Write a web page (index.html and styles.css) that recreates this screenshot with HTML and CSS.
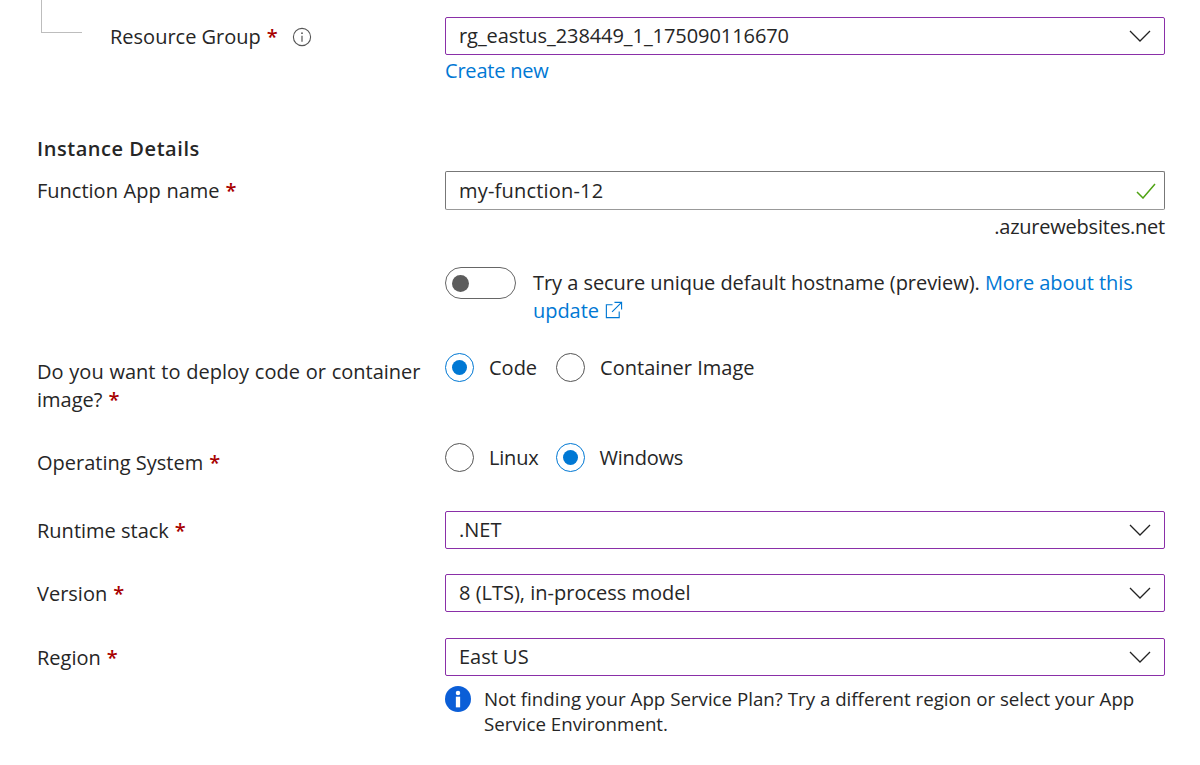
FILE: index.html
```html
<!DOCTYPE html>
<html lang="en">
<head>
<meta charset="utf-8">
<title>Create Function App</title>
<link rel="stylesheet" href="styles.css">
</head>
<body>
<main class="form">
  <div class="row">
    <div class="label label-nested">
      <span class="connector"></span>
      <span>Resource Group</span><span class="req">*</span>
      <svg class="info-outline" viewBox="0 0 20 20" width="20" height="20"><circle cx="10" cy="10" r="8.6" fill="none" stroke="#555" stroke-width="1.1"/><circle cx="10" cy="6.2" r="0.9" fill="#555"/><path d="M10 8.8v6" stroke="#555" stroke-width="1.2"/></svg>
    </div>
    <div class="field">
      <div class="select">
        <span class="value-tight">rg_eastus_238449_1_175090116670</span>
        <svg class="chev" viewBox="0 0 22 12" width="22" height="12"><path d="M1 1l10 10L21 1" fill="none" stroke="#222" stroke-width="1.3"/></svg>
      </div>
      <a class="link create">Create new</a>
    </div>
  </div>

  <h2 class="heading">Instance Details</h2>

  <div class="row">
    <div class="label label-fn">Function App name<span class="req">*</span></div>
    <div class="field">
      <div class="select input">
        <span class="value-wide">my-function-12</span>
        <svg class="check" viewBox="0 0 20 16" width="20" height="16"><path d="M1 9l6 6L19 1" fill="none" stroke="#4fa313" stroke-width="1.5"/></svg>
      </div>
      <div class="suffix">.azurewebsites.net</div>
    </div>
  </div>

  <div class="row row-toggle">
    <div></div>
    <div class="toggle-line">
      <span class="toggle"><span class="knob"></span></span>
      <p class="toggle-text">Try a secure unique default hostname (preview). <a class="link">More about this update
        <svg class="ext" viewBox="0 0 20 20" width="19" height="19"><path d="M9 4H2.5v13.5H16V11M11 1.5h7.5V9M18.5 1.5L8.5 11.5" fill="none" stroke="#0078d4" stroke-width="1.2"/></svg></a></p>
    </div>
  </div>

  <div class="row row-deploy">
    <div class="label label-deploy">Do you want to deploy code or container image?<span class="req">*</span></div>
    <div class="radios">
      <span class="radio on"></span><span class="opt">Code</span>
      <span class="radio"></span><span class="opt">Container Image</span>
    </div>
  </div>

  <div class="row row-os">
    <div class="label label-sel">Operating System<span class="req">*</span></div>
    <div class="radios radios-os">
      <span class="radio"></span><span class="opt">Linux</span>
      <span class="radio on"></span><span class="opt">Windows</span>
    </div>
  </div>

  <div class="row row-runtime">
    <div class="label label-sel">Runtime stack<span class="req">*</span></div>
    <div class="select">
      <span>.NET</span>
      <svg class="chev" viewBox="0 0 22 12" width="22" height="12"><path d="M1 1l10 10L21 1" fill="none" stroke="#222" stroke-width="1.3"/></svg>
    </div>
  </div>

  <div class="row row-version">
    <div class="label label-sel">Version<span class="req">*</span></div>
    <div class="select">
      <span>8 (LTS), in-process model</span>
      <svg class="chev" viewBox="0 0 22 12" width="22" height="12"><path d="M1 1l10 10L21 1" fill="none" stroke="#222" stroke-width="1.3"/></svg>
    </div>
  </div>

  <div class="row row-region">
    <div class="label label-sel">Region<span class="req">*</span></div>
    <div class="field">
      <div class="select">
        <span>East US</span>
        <svg class="chev" viewBox="0 0 22 12" width="22" height="12"><path d="M1 1l10 10L21 1" fill="none" stroke="#222" stroke-width="1.3"/></svg>
      </div>
      <div class="notice">
        <svg class="info-solid" viewBox="0 0 28 28" width="26" height="26"><circle cx="14" cy="14" r="14" fill="#0b5ed7"/><circle cx="14" cy="7.6" r="2.4" fill="#fff"/><rect x="11.7" y="11.5" width="4.6" height="11.5" fill="#fff"/></svg>
        <p class="notice-text">Not finding your App Service Plan? Try a different region or select your App Service Environment.</p>
      </div>
    </div>
  </div>
</main>
</body>
</html>
```
FILE: styles.css
```css
* { box-sizing: border-box; }
html, body { margin: 0; padding: 0; background: #fff; }
body {
  width: 1200px;
  height: 765px;
  overflow: hidden;
  font-family: "Open Sans", "Noto Sans", sans-serif;
  font-size: 20px;
  line-height: 28px;
  color: #262626;
}
.form { position: relative; padding: 17px 35px 0 37px; }
.row { display: grid; grid-template-columns: 408px 720px; }
.label-nested { padding: 6px 0 0 73px; display: flex; align-items: flex-start; }
.label-fn { padding-top: 6px; word-spacing: 0.5px; }
.label-deploy { padding-top: 5px; padding-right: 16px; word-spacing: 0.6px; }
.label-sel { padding-top: 6px; }
.connector {
  position: absolute;
  left: 41px;
  top: 0;
  width: 41px;
  height: 33px;
  border-left: 1.5px solid #bdbdbd;
  border-bottom: 1.5px solid #bdbdbd;
}
.req { color: #a80000; font-weight: 600; margin-left: 6px; }
.info-outline { margin: 4px 0 0 14px; }
.field { display: flex; flex-direction: column; }
.select {
  height: 38px;
  border: 1.5px solid #8a2fa8;
  border-radius: 2px;
  padding: 0 13px 0 13px;
  display: flex;
  align-items: center;
  justify-content: space-between;
}
.input { height: 39px; border-color: #777; border-bottom-color: #999; padding-right: 8px; }
.value-tight { letter-spacing: -0.07px; }
.value-wide { letter-spacing: 0.2px; }
.chev { margin-right: 0; }
.link { color: #0078d4; }
.create { margin-top: 2px; letter-spacing: -0.2px; }
.heading {
  margin: 50px 0 8px;
  font-size: 20px;
  line-height: 28px;
  font-weight: 600;
  letter-spacing: 0.55px;
  color: #262626;
}
.suffix { margin-top: 3px; text-align: right; letter-spacing: -0.22px; }
.row-toggle { margin-top: 26px; }
.toggle-line { display: flex; gap: 17px; align-items: flex-start; }
.toggle {
  flex: none;
  width: 71px;
  height: 32px;
  border: 1.5px solid #666;
  border-radius: 16px;
  padding-left: 6px;
  display: flex;
  align-items: center;
}
.knob { width: 17px; height: 17px; border-radius: 50%; background: #5c5c5c; }
.toggle-text { margin: 2px 0 0; letter-spacing: -0.05px; }
.ext { vertical-align: -2px; }
.row-deploy { margin-top: 28px; }
.row-os { margin-top: 29px; }
.radios { display: flex; align-items: center; height: 28px; }
.radio {
  flex: none;
  width: 29px;
  height: 29px;
  border: 1.5px solid #555;
  border-radius: 50%;
  display: flex;
  align-items: center;
  justify-content: center;
}
.radio.on { border-color: #0078d4; }
.radio.on::after {
  content: "";
  width: 15px;
  height: 15px;
  border-radius: 50%;
  background: #0078d4;
}
.opt { margin: 1px 19px 0 15px; }
.radios-os .opt { margin-right: 17px; letter-spacing: -0.2px; }
.row-runtime { margin-top: 34px; }
.row-version { margin-top: 25px; }
.row-region { margin-top: 26px; }
.notice { display: flex; gap: 13px; margin-top: 9px; align-items: flex-start; }
.info-solid { flex: none; margin-top: 1px; }
.notice-text { margin: 1px 0 0; line-height: 25px; font-size: 18.72px; }
```
